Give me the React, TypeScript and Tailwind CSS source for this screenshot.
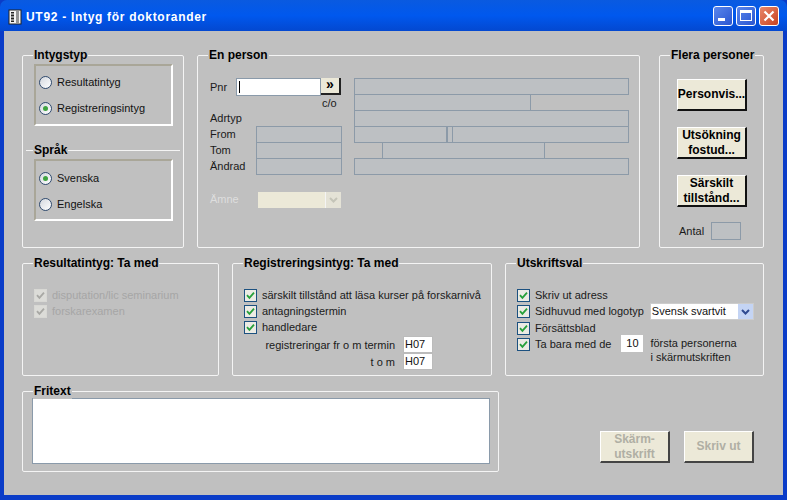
import React from "react";

const font = { fontFamily: '"Liberation Sans", Arial, sans-serif' };

function Group({ title, className, children }: { title: string; className: string; children?: React.ReactNode }) {
  return (
    <div className={"relative border border-[#f4f4f4] rounded-[2px] shrink-0 " + className}>
      <span className="absolute left-[10px] top-[-8px] bg-[#c0c0c0] px-[1px] text-[12px] leading-[15px] font-bold text-black whitespace-nowrap">
        {title}
      </span>
      {children}
    </div>
  );
}

function Radio({ on, label }: { on?: boolean; label: string }) {
  return (
    <div className="flex items-center h-[26px]">
      <span className="w-[13px] h-[13px] rounded-full border border-[#2f4a6e] bg-gradient-to-br from-[#d4d8de] to-[#ffffff] flex items-center justify-center shrink-0 ml-[2px]">
        {on && <span className="w-[5px] h-[5px] rounded-full bg-[#3fa33f]" />}
      </span>
      <span className="ml-[5px] text-[11px] text-[#111]">{label}</span>
    </div>
  );
}

function Check({ label, off }: { label?: string; off?: boolean }) {
  return (
    <div className="flex items-center h-[16px]">
      <span
        className={
          "w-[13px] h-[13px] flex items-center justify-center shrink-0 border " +
          (off ? "border-[#d8d8d4] bg-[#dcdcd8]" : "border-[#1c5180] bg-[#ecebe4]")
        }
      >
        <svg width="9" height="9" viewBox="0 0 9 9">
          <path d="M1 4.2 L3.4 6.8 L8 1.6" fill="none" stroke={off ? "#a8a8a4" : "#27a03a"} strokeWidth="1.8" />
        </svg>
      </span>
      {label && <span className={"ml-[5px] text-[11px] whitespace-nowrap " + (off ? "text-[#a6a6a6]" : "text-[#1a1a1a]")}>{label}</span>}
    </div>
  );
}

function Btn({ children, disabled, className = "" }: { children: React.ReactNode; disabled?: boolean; className?: string }) {
  return (
    <div
      className={
        "w-[70px] h-[32px] bg-[#ece9d8] border-t border-l border-t-white border-l-white border-b-2 border-r-2 flex items-center justify-center text-center text-[12px] leading-[15px] font-bold " +
        (disabled ? "text-[#b0afa4] border-b-[#444] border-r-[#444] " : "text-black border-b-[#111] border-r-[#111] ") +
        className
      }
    >
      <span>{children}</span>
    </div>
  );
}

const box = "border border-[#8c9aa8] bg-[#bdc0c3] h-[17px] -mb-px shrink-0";

function Panel({ children }: { children: React.ReactNode }) {
  return (
    <div className="w-[139px] h-[62px] border-2 border-t-[#a9a698] border-l-[#a9a698] border-b-white border-r-white pl-[1px] pt-[3px]">
      {children}
    </div>
  );
}

function Label({ children, className = "" }: { children: React.ReactNode; className?: string }) {
  return <span className={"text-[11px] leading-[16px] text-[#1a1a1a] whitespace-nowrap " + className}>{children}</span>;
}

export default function App() {
  return (
    <div className="w-[787px] h-[500px] flex flex-col overflow-hidden bg-[#0a3cc8]" style={font}>
      <div className="h-[31px] shrink-0 rounded-t-[7px] bg-gradient-to-b from-[#0a5ae0] via-[#0058ee] to-[#0348d0] flex items-center pl-[8px] pr-[8px] pt-[3px]">
        <svg width="14" height="16" viewBox="0 0 14 16" className="shrink-0">
          <rect x="1" y="1" width="12" height="14" fill="#f4f4f4" stroke="#222" />
          <rect x="3" y="3" width="3" height="10" fill="#222" />
          <path d="M8 3h3M8 5h3M8 7h3M8 9h3M8 11h3M8 13h3" stroke="#333" />
          <path d="M3 5h3M3 8h3M3 11h3" stroke="#f4f4f4" />
        </svg>
        <span className="ml-[4px] text-white text-[12px] font-bold tracking-[0.7px] whitespace-nowrap">UT92 - Intyg för doktorander</span>
        <div className="ml-auto flex gap-[3px] mt-[-3px]">
          <div className="w-[20px] h-[20px] rounded-[3px] border border-white bg-gradient-to-br from-[#5a86ec] to-[#2a55d0] flex items-end pl-[4px] pb-[4px]">
            <span className="w-[7px] h-[3px] bg-white" />
          </div>
          <div className="w-[20px] h-[20px] rounded-[3px] border border-white bg-gradient-to-br from-[#5a86ec] to-[#2a55d0] flex items-center justify-center">
            <span className="w-[12px] h-[11px] border border-white border-t-[3px]" />
          </div>
          <div className="w-[20px] h-[20px] rounded-[3px] border border-white bg-gradient-to-br from-[#e8876a] to-[#c8401c] flex items-center justify-center">
            <svg width="12" height="12" viewBox="0 0 12 12">
              <path d="M1.5 1.5 L10.5 10.5 M10.5 1.5 L1.5 10.5" stroke="white" strokeWidth="2.2" />
            </svg>
          </div>
        </div>
      </div>

      <div className="h-[464px] mx-[4px] bg-[#c0c0c0] pl-[18px] pt-[24px] shrink-0">
        {/* Row 1 */}
        <div className="flex">
          <Group title="Intygstyp" className="w-[162px] h-[193px]">
            <div className="pl-[11px] pt-[8px]">
              <Panel>
                <Radio label="Resultatintyg" />
                <Radio on label="Registreringsintyg" />
              </Panel>
            </div>
            <div className="relative h-[1px] w-[154px] ml-[3px] mt-[24px] bg-[#f4f4f4]">
              <span className="absolute left-[7px] top-[-7px] bg-[#c0c0c0] px-[1px] text-[12px] leading-[15px] font-bold text-black">Språk</span>
            </div>
            <div className="pl-[11px] pt-[8px]">
              <Panel>
                <div className="pt-[1px]">
                  <Radio on label="Svenska" />
                  <Radio label="Engelska" />
                </div>
              </Panel>
            </div>
          </Group>

          <Group title="En person" className="w-[443px] h-[193px] ml-[13px] flex pt-[22px] pl-[12px]">
            <div className="w-[144px] shrink-0">
              <div className="flex items-center h-[17px]">
                <Label className="w-[26px]">Pnr</Label>
                <div className="w-[85px] h-[18px] bg-white border border-[#8a9aaa] flex items-center pl-[2px]">
                  <span className="w-[1px] h-[12px] bg-black" />
                </div>
                <div className="w-[20px] h-[17px] bg-[#ece9d8] border-r-2 border-b-2 border-r-[#222] border-b-[#222] text-[14px] font-bold leading-[13px] text-center text-black">»</div>
              </div>
              <div className="h-[15px] pl-[112px] flex items-center"><Label>c/o</Label></div>
              <div className="h-[16px] flex items-center"><Label>Adrtyp</Label></div>
              {["From", "Tom", "Ändrad"].map((t) => (
                <div key={t} className="h-[16px] flex items-start">
                  <Label className="w-[46px]">{t}</Label>
                  <div className={box + " w-[86px]"} />
                </div>
              ))}
              <div className="flex items-center h-[17px] mt-[17px]">
                <span className="w-[48px] text-[11px] text-[#dedede]">Ämne</span>
                <div className="w-[83px] h-[16px] bg-[#ece9d8] flex justify-end">
                  <div className="w-[16px] h-[16px] bg-[#e4e2d6] border-l border-[#f4f4f4] flex items-center justify-center">
                    <svg width="9" height="6" viewBox="0 0 9 6"><path d="M1 1 L4.5 4.5 L8 1" fill="none" stroke="#c4c4b8" strokeWidth="2" /></svg>
                  </div>
                </div>
              </div>
            </div>
            <div className="w-[275px] shrink-0">
              <div className={box + " w-[275px]"} />
              <div className={box + " w-[177px]"} />
              <div className={box + " w-[275px]"} />
              <div className="flex">
                <div className={box + " w-[93px]"} />
                <div className={box + " w-[6px]"} />
                <div className={box + " w-[177px] -ml-px"} />
              </div>
              <div className="pl-[28px]">
                <div className={box + " w-[163px]"} />
              </div>
              <div className={box + " w-[275px]"} />
            </div>
          </Group>

          <Group title="Flera personer" className="w-[105px] h-[193px] ml-[19px] flex flex-col items-center pt-[23px] pl-[1px]">
            <Btn>Personvis...</Btn>
            <Btn className="mt-[16px]">Utsökning<br />fostud...</Btn>
            <Btn className="mt-[16px]">Särskilt<br />tillstånd...</Btn>
            <div className="flex items-center mt-[15px] mr-[4px]">
              <Label className="w-[32px]">Antal</Label>
              <div className="w-[30px] h-[18px] border border-[#8c9aa8] bg-[#bdc0c3]" />
            </div>
          </Group>
        </div>

        {/* Row 2 */}
        <div className="flex mt-[15px]">
          <Group title="Resultatintyg: Ta med" className="w-[197px] h-[113px] pl-[11px] pt-[23px]">
            <Check off label="disputation/lic seminarium" />
            <Check off label="forskarexamen" />
          </Group>
          <Group title="Registreringsintyg: Ta med" className="w-[260px] h-[113px] ml-[13px] pl-[11px] pt-[23px]">
            <Check label="särskilt tillstånd att läsa kurser på forskarnivå" />
            <Check label="antagningstermin" />
            <Check label="handledare" />
            <div className="flex flex-col items-start w-[190px]">
              <div className="flex items-center w-full h-[17px] mt-[1px]">
                <Label className="w-[151px] text-right">registreringar fr o m termin</Label>
                <div className="w-[30px] h-[17px] ml-[8px] bg-white border border-[#bbb] text-[11px] leading-[15px] pl-[1px] text-[#111]">H07</div>
              </div>
              <div className="flex items-center w-full h-[17px]">
                <Label className="w-[151px] text-right">t o m</Label>
                <div className="w-[30px] h-[17px] ml-[8px] bg-white border border-[#bbb] text-[11px] leading-[15px] pl-[1px] text-[#111]">H07</div>
              </div>
            </div>
          </Group>
          <Group title="Utskriftsval" className="w-[259px] h-[113px] ml-[13px] pl-[11px] pt-[23px]">
            <Check label="Skriv ut adress" />
            <div className="flex items-center">
              <Check label="Sidhuvud med logotyp" />
              <div className="ml-[6px] w-[104px] h-[17px] bg-white flex items-center justify-between border border-[#ccc]">
                <span className="text-[11px] pl-[1px] text-[#111]">Svensk svartvit</span>
                <span className="w-[15px] h-[15px] bg-[#c4d4f4] flex items-center justify-center">
                  <svg width="9" height="6" viewBox="0 0 9 6"><path d="M1 1 L4.5 4.5 L8 1" fill="none" stroke="#2f4a90" strokeWidth="2" /></svg>
                </span>
              </div>
            </div>
            <Check label="Försättsblad" />
            <div className="flex items-start">
              <Check label="Ta bara med de" />
              <div className="ml-[10px] w-[22px] h-[17px] bg-white text-[11px] leading-[17px] text-center text-[#111] mt-[-1px]">10</div>
              <div className="ml-[7px] text-[11px] leading-[14px] text-[#1a1a1a]">första personerna<br />i skärmutskriften</div>
            </div>
          </Group>
        </div>

        {/* Row 3 */}
        <div className="flex mt-[15px]">
          <Group title="Fritext" className="w-[477px] h-[81px] pl-[9px] pt-[6px]">
            <div className="w-[458px] h-[66px] bg-white border border-[#8a9aaa]" />
          </Group>
          <div className="flex pt-[40px] ml-[101px] gap-[14px]">
            <Btn disabled>Skärm-<br />utskrift</Btn>
            <Btn disabled>Skriv ut</Btn>
          </div>
        </div>
      </div>
      <div className="flex-1 bg-[#0a3cc8]" />
    </div>
  );
}
